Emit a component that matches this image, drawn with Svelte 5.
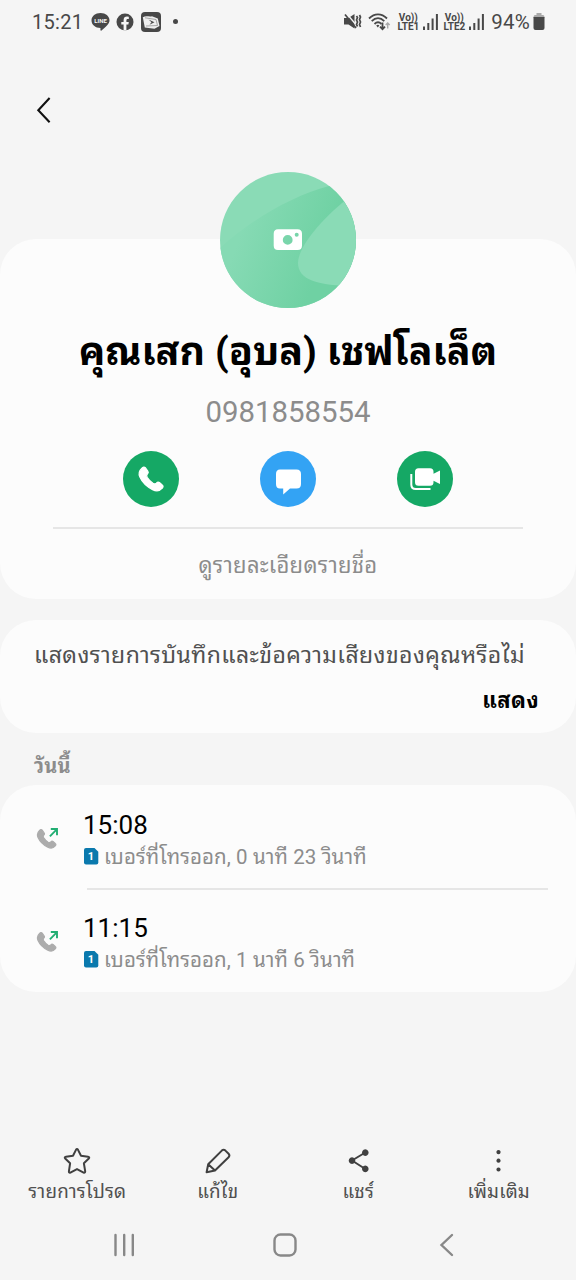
<script>
    const contact = {
        name: 'คุณเสก (อุบล) เชฟโลเล็ต',
        number: '0981858554'
    };

    const calls = [
        { time: '15:08', sim: 1, text: 'เบอร์ที่โทรออก, 0 นาที 23 วินาที' },
        { time: '11:15', sim: 1, text: 'เบอร์ที่โทรออก, 1 นาที 6 วินาที' }
    ];

    const tools = [
        { id: 'star', label: 'รายการโปรด' },
        { id: 'edit', label: 'แก้ไข' },
        { id: 'share', label: 'แชร์' },
        { id: 'more', label: 'เพิ่มเติม' }
    ];

    const handset = 'M4 1.5C5 .3 6.500 0 7.400 1L10 4.700C10.700 5.700 10.300 6.600 9.300 7.500C8.300 8.500 8.500 9.400 9.400 10.900C11 13.400 12.800 15.300 15.100 16.700C16.500 17.500 17.600 17.300 18.500 16.400C19.500 15.300 20.400 15 21.500 15.800L24.300 18.200C25.500 19.100 25.300 20.400 24.300 21.500C22 24.200 18.500 25 14.700 23C9.200 20.200 4.300 15.500 2 10.400C.6 7.300 1.500 3.800 4 1.500Z';
</script>

<div class="screen">
    <header class="status">
        <span class="clock">15:21</span>
        <svg class="line" width="19" height="18" viewBox="0 0 19 18">
            <path fill="#484848" d="M9.500 0C14.600 0 18.500 3.200 18.500 7.400C18.500 11 14.500 13.900 10.500 17.500C9.400 18.300 9.300 17 9.500 14.900C4.400 14.900.5 11.700.5 7.400C.5 3.200 4.400 0 9.500 0Z" />
            <text x="9.500" y="9.700" text-anchor="middle">LINE</text>
        </svg>
        <svg class="facebook" width="18" height="18" viewBox="0 0 18 18">
            <circle cx="9" cy="9" r="8.500" fill="#484848" />
            <path fill="#f5f5f5" d="M7.600 17.600V11.600H5.300V9H7.600V7.200C7.600 4.700 9 3.600 11 3.600L12.800 3.800V6H11.700C10.700 6 10.400 6.600 10.400 7.400V9H12.800L12.400 11.600H10.400V17.600Z" />
        </svg>
        <svg class="app" width="20" height="20" viewBox="0 0 20 20">
            <rect width="20" height="20" rx="4" fill="#484848" />
            <path d="M1.800 5.200C5 3.200 8 5 11 4.200L16.800 6.500L18.500 14L13.500 16.800L3.800 15.500Z" fill="#eee" />
            <path d="M4 5.800L15 7.500L16.500 13.500L5 14" fill="none" stroke="#888" stroke-width=".7" />
            <path d="M7.500 7.500L13.500 10.300L8.500 12.700L10.500 10.200Z" fill="#484848" />
        </svg>
        <i class="dot"></i>

        <svg class="mute" width="18" height="18" viewBox="0 0 18 18" fill="none" stroke="#484848" stroke-width="1.700">
            <path d="M0 5H4.500L10.500 1V15.500L4.500 11.500H0Z" fill="#484848" stroke="none" />
            <path d="M3 1L13.500 13.500" stroke="#f5f5f5" stroke-width="1.300" />
            <path d="M1 1.500L12 15M12.500 3L13.500 4.500L12.500 7L13.500 9L12.500 11.500L13.500 13.500M15.500 2L16.500 4L15.500 6.500L16.500 9L15.500 11.500L16.500 14" />
        </svg>
        <svg class="wifi" width="23" height="18" viewBox="0 0 23 18" fill="none" stroke="#484848" stroke-width="1.800">
            <path d="M1 5.500C6.500 0 13.500 0 19 5.500M3.700 8.200C7.700 4.200 12.300 4.200 16.300 8.200M6.500 11C8.900 8.700 11.100 8.700 13.500 11" />
            <path d="M8.200 12.600C9.400 11.600 10.400 11.600 11.400 12.600L9.800 14.400Z" fill="#484848" stroke="none" />
            <path d="M14.500 9.500V16M12 13.700L14.500 16.200L17 13.700" />
            <path d="M19.700 15.500V10M17.700 12L19.700 10L21.700 12" stroke="#aaa" stroke-width="1.400" />
        </svg>
        {#each [1, 2] as sim}
            <div class="volte"><span>Vo))</span><span>LTE{sim}</span></div>
            <svg class="bars" width="15" height="16" viewBox="0 0 15 16" fill="#484848">
                <path d="M0 12.500H2V16H0ZM4.300 9H6.300V16H4.300ZM8.600 4.500H10.600V16H8.600ZM12.900 0H14.900V16H12.900Z" />
            </svg>
        {/each}
        <span class="percent">94%</span>
        <svg class="battery" width="12" height="18" viewBox="0 0 12 18">
            <path d="M3.500 0H8.500V2H10Q11.500 2 11.500 5H.5Q.5 2 2 2H3.500Z" fill="#aaa" />
            <path d="M.5 4H11.500V15Q11.500 17 9.500 17H2.500Q.5 17 .5 15Z" fill="#484848" />
        </svg>
    </header>

    <nav class="appbar">
        <svg width="16" height="28" viewBox="0 0 16 28" fill="none" stroke="#111" stroke-width="2.100">
            <path d="M14.600 2L3.300 14.200L14.600 26.300" />
        </svg>
    </nav>

    <section class="card profile">
        <svg class="avatar" width="136" height="136" viewBox="0 0 136 136">
            <defs>
                <clipPath id="round"><circle cx="68" cy="68" r="68" /></clipPath>
                <linearGradient id="sweep" x1="25" y1="50" x2="105" y2="80" gradientUnits="userSpaceOnUse">
                    <stop offset="0" stop-color="#86dab4" />
                    <stop offset="1" stop-color="#6fd1a3" />
                </linearGradient>
            </defs>
            <g clip-path="url(#round)">
                <rect width="136" height="136" fill="#8adbb6" />
                <path d="M0 76C32 47 72 24 109 14L136 14V136H0Z" fill="url(#sweep)" />
                <path d="M136 20C107 41 78 73 78 91C78 108 98 114 136 114Z" fill="#8adbb6" />
            </g>
            <path fill="#fff" fill-rule="evenodd" d="M58 57.300H77.500Q82 57.300 82 61.800V73.500Q82 78 77.500 78H58Q53.700 78 53.700 73.500V61.800Q53.700 57.300 58 57.300ZM67.700 63A4.900 4.900 0 1 0 67.700 72.800A4.900 4.900 0 1 0 67.700 63ZM76.700 60.700A2 2 0 1 0 76.700 64.700A2 2 0 1 0 76.700 60.700Z" />
        </svg>
        <h1>{contact.name}</h1>
        <p class="number">{contact.number}</p>
        <div class="actions">
            <button class="call" aria-label="โทร">
                <svg width="56" height="56" viewBox="0 0 56 56" fill="#fff" stroke="#fff" stroke-width="1.300"><path transform="translate(14.900 15.700)" d={handset} /></svg>
            </button>
            <button class="message" aria-label="ข้อความ">
                <svg width="56" height="56" viewBox="0 0 56 56" fill="#fff"><path d="M20 18.500H36.500Q41 18.500 41 23V33Q41 37.500 36.500 37.500H30L23.200 43.400V37.500H20Q16 37.500 16 33V23Q16 18.500 20 18.500Z" /></svg>
            </button>
            <button class="video" aria-label="วิดีโอคอล">
                <svg width="56" height="56" viewBox="0 0 56 56" fill="#fff">
                    <path d="M21.500 17.300H33Q36.500 17.300 36.500 20.800V22.800L43 19.500V33L36.500 29.700V31.200Q36.500 34.700 33 34.700H21.500Q18 34.700 18 31.200V20.800Q18 17.300 21.500 17.300Z" />
                    <path d="M14.300 23V33.500Q14.300 38 18.800 38H33.500" fill="none" stroke="#fff" stroke-width="2" />
                </svg>
            </button>
        </div>
        <hr />
        <a class="details" href="#details">ดูรายละเอียดรายชื่อ</a>
    </section>

    <section class="card prompt">
        <p>แสดงรายการบันทึกและข้อความเสียงของคุณหรือไม่</p>
        <strong>แสดง</strong>
    </section>

    <h2>วันนี้</h2>

    <section class="card log">
        {#each calls as call}
            <div class="entry">
                <svg class="outgoing" width="24" height="24" viewBox="0 0 24 24">
                    <path transform="translate(.5 2.400) scale(.77)" d={handset} fill="#acacac" stroke="#acacac" stroke-width="1.600" />
                    <path d="M13.900 9.300L20.500 2.700M14.800 2H21V8.300" fill="none" stroke="#22ae73" stroke-width="1.900" />
                </svg>
                <div class="info">
                    <span class="time">{call.time}</span>
                    <span class="desc">
                        <svg width="15" height="17" viewBox="0 0 15 17">
                            <path d="M2 0H10.500L14.300 3.800V14.500Q14.300 16.500 12.300 16.500H2Q0 16.500 0 14.500V2Q0 0 2 0Z" fill="#0a79ad" />
                            <text x="7" y="12.300" text-anchor="middle">{call.sim}</text>
                        </svg>
                        <span class="line-text">{call.text}</span>
                    </span>
                </div>
            </div>
        {/each}
    </section>

    <footer class="tools">
        {#each tools as tool}
            <div class="tool">
                <svg width="30" height="30" viewBox="0 0 30 30" fill="none" stroke="#404040" stroke-width="2" stroke-linejoin="round">
                    {#if tool.id === 'star'}
                        <path d="M14.100 3.600Q15 2.200 15.900 3.600L19 9.700L26 10.700Q28 11.100 26.800 12.500L21.900 17.300L23.200 25.300Q23.200 27.200 21.600 26.600L15 23.100L8.400 26.600Q6.800 27.200 6.900 25.300L8.100 17.300L3.200 12.500Q2 11.100 4 10.700L11 9.700Z" />
                    {:else if tool.id === 'edit'}
                        <path d="M3.600 26.200L5.200 18.200L18.800 4.600Q20.600 2.900 22.400 4.600L25.600 7.800Q27.200 9.500 25.600 11.300L12 24.500ZM5.200 18.200L12 24.500" />
                    {:else if tool.id === 'share'}
                        <path d="M22.300 6.500L9 14.500L22.300 23" />
                        <path d="M22.300 3.300a3.300 3.300 0 1 0 .01 0M9 11.300a3.300 3.300 0 1 0 .01 0M22.300 19.600a3.300 3.300 0 1 0 .01 0" fill="#404040" stroke="none" />
                    {:else}
                        <path d="M14.500 4a2.100 2.100 0 1 0 .01 0M14.500 12.600a2.100 2.100 0 1 0 .01 0M14.500 21.400a2.100 2.100 0 1 0 .01 0" fill="#404040" stroke="none" />
                    {/if}
                </svg>
                <span>{tool.label}</span>
            </div>
        {/each}
    </footer>

    <div class="navbar">
        <svg width="24" height="24" viewBox="0 0 24 24"><path d="M3.500 2V22M12.200 2V22M20.800 2V22" /></svg>
        <svg width="24" height="24" viewBox="0 0 24 24"><rect x="1.500" y="1.500" width="21" height="21" rx="6" /></svg>
        <svg width="24" height="24" viewBox="0 0 24 24"><path d="M18 2L7.500 12L18 22" /></svg>
    </div>
</div>

<style>
    :global(body) {
        background: #f5f5f5;
    }

    .screen {
        width: 576px;
        height: 1280px;
        overflow: hidden;
        display: flex;
        flex-direction: column;
        background: #f5f5f5;
        color: #000;
        font-family: Roboto, "Noto Sans Thai Looped", "Noto Sans Thai", "Noto Sans", sans-serif;
    }

    .screen svg {
        display: block;
        flex: none;
    }

    h1, h2, p {
        margin: 0;
        white-space: nowrap;
    }

    .status {
        height: 43px;
        box-sizing: border-box;
        padding: 0 31px 0 32px;
        display: flex;
        align-items: center;
        color: #484848;
        font-size: 20px;
    }

    .clock {
        width: 52px;
        margin-right: 7px;
        letter-spacing: 0.3px;
    }

    .line text {
        font: bold 6px Roboto, sans-serif;
        fill: #f5f5f5;
    }

    .facebook {
        margin-left: 6px;
    }

    .app {
        margin-left: 7px;
    }

    .dot {
        width: 5px;
        height: 5px;
        margin-left: 12px;
        border-radius: 50%;
        background: #484848;
    }

    .mute {
        margin-left: auto;
    }

    .wifi {
        margin: 0 5px 0 6px;
    }

    .volte {
        width: 24px;
        display: flex;
        flex-direction: column;
        align-items: center;
        font-size: 10px;
        font-weight: 700;
        line-height: 9px;
    }

    .bars {
        margin: 0 4px 0 3px;
    }

    .percent {
        margin: 0 3px;
        font-size: 20.5px;
        letter-spacing: 0.2px;
    }

    .appbar {
        height: 196px;
        box-sizing: border-box;
        padding: 53px 35px 0;
    }

    .card {
        background: #fcfcfc;
        border-radius: 36px;
        flex: none;
        box-sizing: border-box;
    }

    .profile {
        height: 360px;
        display: flex;
        flex-direction: column;
        align-items: center;
    }

    .avatar {
        margin-top: -67px;
    }

    h1 {
        height: 60px;
        margin-top: 14px;
        font-size: 39.4px;
        font-weight: 700;
        line-height: 60px;
    }

    .number {
        height: 36px;
        margin-top: 12px;
        color: #8c8c8c;
        font-size: 29.4px;
        line-height: 36px;
    }

    .actions {
        display: flex;
        gap: 81px;
        margin-top: 21px;
    }

    .actions button {
        width: 56px;
        height: 56px;
        padding: 0;
        border: 0;
        border-radius: 50%;
        background: #15a865;
    }

    .actions .message {
        background: #33a3f4;
    }

    hr {
        width: 470px;
        height: 2px;
        margin: 20px 0 0;
        border: 0;
        background: #e6e6e6;
    }

    .details {
        margin-top: 19px;
        color: #8c8c8c;
        font-size: 22px;
        line-height: 36px;
        letter-spacing: 0.3px;
        text-decoration: none;
    }

    .prompt {
        height: 113px;
        margin-top: 21px;
        padding: 18px 37px 0 34px;
        display: flex;
        flex-direction: column;
    }

    .prompt p {
        color: #505050;
        font-size: 23px;
        line-height: 36px;
        letter-spacing: 0.4px;
    }

    .prompt strong {
        align-self: flex-end;
        margin-top: 9px;
        font-size: 22px;
        line-height: 36px;
        letter-spacing: 0.4px;
    }

    h2 {
        height: 52px;
        padding: 16px 34px 0;
        box-sizing: border-box;
        color: #8c8c8c;
        font-size: 20px;
        font-weight: 700;
        line-height: 34px;
        letter-spacing: 0.2px;
    }

    .log {
        height: 207px;
    }

    .entry {
        height: 103px;
        padding-left: 36px;
        display: flex;
        align-items: center;
    }

    .outgoing {
        margin-top: 4px;
    }

    .info {
        flex: 1;
        margin-left: 23px;
        height: 103px;
        display: flex;
        flex-direction: column;
    }

    .entry + .entry {
        background: linear-gradient(#e6e6e6, #e6e6e6) 87px 0 / 461px 2px no-repeat;
    }

    .time {
        margin-top: 23px;
        font-size: 26px;
        line-height: 34px;
    }

    .desc {
        display: flex;
        align-items: center;
        height: 28px;
        padding-left: 1px;
        color: #8c8c8c;
        font-size: 20.5px;
        white-space: nowrap;
    }

    .desc text {
        font: bold 11px Roboto, sans-serif;
        fill: #fff;
    }

    .line-text {
        margin-left: 5px;
        padding-top: 1px;
        line-height: 28px;
        letter-spacing: 0.1px;
    }

    .tools {
        margin-top: auto;
        height: 64px;
        padding: 0 7px;
        display: grid;
        grid-template-columns: repeat(4, 1fr);
    }

    .tool {
        display: flex;
        flex-direction: column;
        align-items: center;
        color: #505050;
        font-size: 18.8px;
        line-height: 33px;
        letter-spacing: 0.2px;
        white-space: nowrap;
    }

    .navbar {
        height: 70px;
        box-sizing: border-box;
        padding: 23px 118px 0 112px;
        display: flex;
        justify-content: space-between;
        fill: none;
        stroke: #888;
        stroke-width: 2.4;
        stroke-linecap: round;
    }
</style>
